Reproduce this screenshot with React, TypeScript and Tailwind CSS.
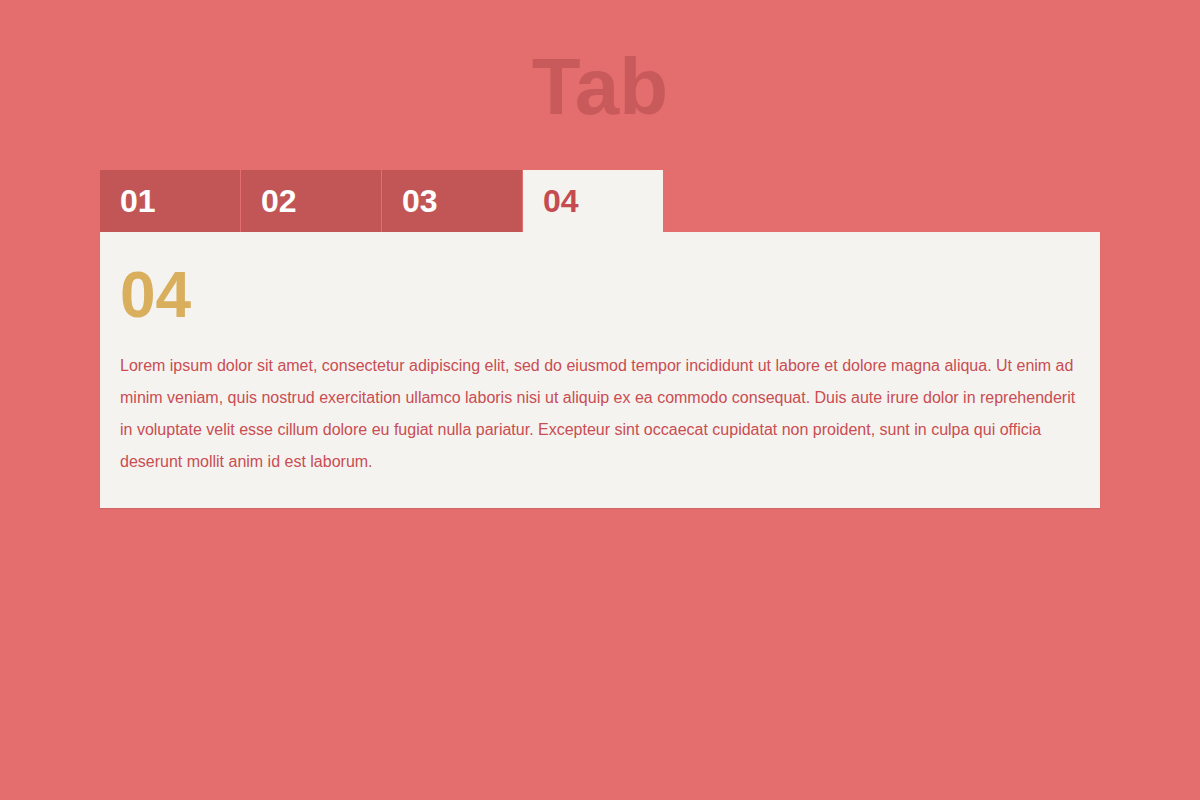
import { useState } from "react";

const tabs = ["01", "02", "03", "04"];

const lorem =
  "Lorem ipsum dolor sit amet, consectetur adipiscing elit, sed do eiusmod tempor incididunt ut labore et dolore magna aliqua. Ut enim ad minim veniam, quis nostrud exercitation ullamco laboris nisi ut aliquip ex ea commodo consequat. Duis aute irure dolor in reprehenderit in voluptate velit esse cillum dolore eu fugiat nulla pariatur. Excepteur sint occaecat cupidatat non proident, sunt in culpa qui officia deserunt mollit anim id est laborum.";

export default function App() {
  const [active, setActive] = useState(3);

  return (
    <div className="min-h-[800px] w-full bg-[#e46e6e] font-['Liberation_Sans',Arial,sans-serif]">
      <h1 className="pt-[41px] text-center text-[80px] font-bold leading-[92px] text-[#c85a5c]">
        Tab
      </h1>

      <div className="mx-auto mt-[37px] w-[1000px]">
        <div className="flex gap-px">
          {tabs.map((t, i) => (
            <button
              key={t}
              onClick={() => setActive(i)}
              className={
                i === active
                  ? "h-[62px] w-[140px] bg-[#f5f3f0] px-5 text-left text-[32px] font-bold text-[#c44b4f]"
                  : "h-[62px] w-[140px] bg-[#c25656] px-5 text-left text-[32px] font-bold text-white"
              }
            >
              {t}
            </button>
          ))}
        </div>

        <div className="bg-[#f5f3f0] px-5 pt-[26px] pb-[30px] shadow-[0_1px_1px_rgba(0,0,0,0.08)]">
          <h2 className="text-[64px] font-bold leading-[74px] text-[#d9ae5c]">
            {tabs[active]}
          </h2>
          <p className="mt-[18px] text-[16px] leading-[32px] text-[#c94d52]">
            {lorem}
          </p>
        </div>
      </div>
    </div>
  );
}
